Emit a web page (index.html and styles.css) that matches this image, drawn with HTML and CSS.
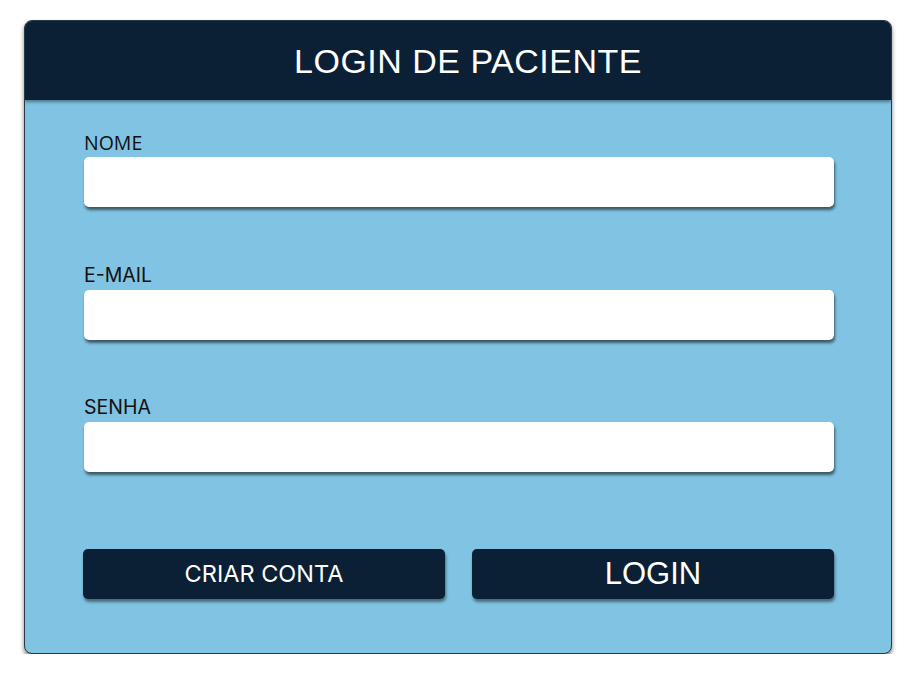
FILE: index.html
```html
<!DOCTYPE html>
<html lang="pt">
<head>
<meta charset="utf-8">
<title>Login de Paciente</title>
<link rel="stylesheet" href="styles.css">
</head>
<body>
<div class="card">
  <div class="card-header">LOGIN DE PACIENTE</div>
  <form class="card-body">
    <div class="field">
      <label class="label label-nome">NOME</label>
      <input class="input" type="text">
    </div>
    <div class="field">
      <label class="label">E-MAIL</label>
      <input class="input" type="email">
    </div>
    <div class="field">
      <label class="label">SENHA</label>
      <input class="input" type="password">
    </div>
    <div class="actions">
      <button type="button" class="btn btn-secondary">CRIAR CONTA</button>
      <button type="button" class="btn btn-primary">LOGIN</button>
    </div>
  </form>
</div>
</body>
</html>
```
FILE: styles.css
```css
html, body {
  margin: 0;
  padding: 0;
  background: #ffffff;
}
body {
  padding: 20px 17px 0 24px;
  font-family: "Liberation Sans", Arial, sans-serif;
}
.card {
  width: 868px;
  height: 634px;
  box-sizing: border-box;
  background: #80c3e2;
  border: 1px solid #2a3a44;
  border-radius: 8px;
  box-shadow: 0 3px 4px rgba(0, 0, 0, 0.5);
  overflow: hidden;
  display: flex;
  flex-direction: column;
}
.card-header {
  background: #0b1f35;
  color: #ffffff;
  height: 79px;
  display: flex;
  align-items: center;
  justify-content: center;
  font-size: 34px;
  letter-spacing: 0.5px;
  padding-top: 2px;
  padding-left: 20px;
  box-sizing: border-box;
  box-shadow: 0 2px 3px rgba(0, 0, 0, 0.4);
  position: relative;
  flex-shrink: 0;
}
.card-body {
  margin: 0;
  padding: 30px 57px 0 59px;
  display: flex;
  flex-direction: column;
}
.field {
  display: flex;
  flex-direction: column;
  margin-bottom: 55.5px;
}
.label {
  font-family: Inter, "Noto Sans", sans-serif;
  font-size: 19.5px;
  color: #111;
  height: 25px;
  line-height: 25px;
  margin-bottom: 2px;
}
.label-nome {
  font-family: "Open Sans", "Noto Sans", sans-serif;
}
.input {
  height: 50px;
  box-sizing: border-box;
  border: none;
  border-radius: 5px;
  background: #ffffff;
  box-shadow: 1px 3px 3px rgba(0, 0, 0, 0.55);
  margin: 0;
  padding: 0 12px;
  outline: none;
}
.actions {
  margin-top: 21px;
  display: grid;
  grid-template-columns: 362px 362px;
  column-gap: 27px;
  margin-left: -1px;
}
.btn {
  height: 50px;
  border: none;
  border-radius: 5px;
  background: #0b1f35;
  color: #ffffff;
  box-shadow: 1px 3px 3px rgba(0, 0, 0, 0.45);
  cursor: pointer;
  padding: 0;
}
.btn-secondary {
  font-family: Inter, "Noto Sans", sans-serif;
  font-size: 23.5px;
}
.btn-primary {
  font-family: "Liberation Sans", Arial, sans-serif;
  font-size: 31px;
}
```
